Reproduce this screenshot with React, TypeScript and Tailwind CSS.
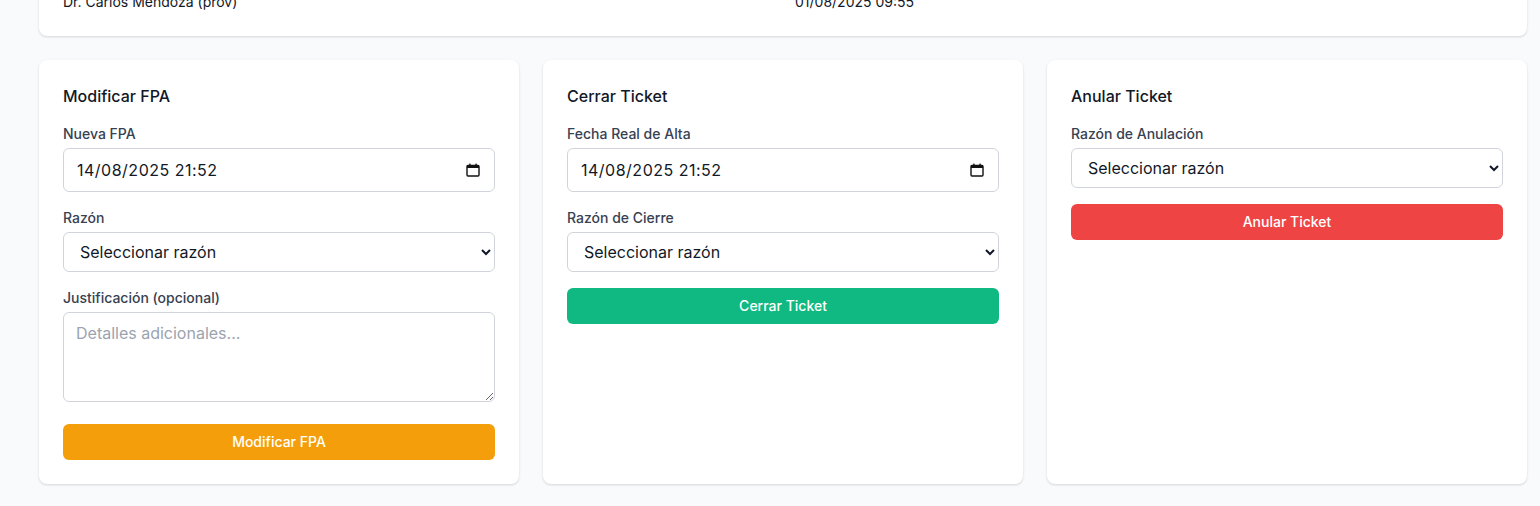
import type { ReactNode } from "react";

const field =
  "w-full rounded-md border border-[#d1d5db] bg-white px-3 text-base text-[#111827] outline-none focus:border-[#3b82f6]";

function Label({ children }: { children: ReactNode }) {
  return <label className="mb-1 block text-sm font-medium text-[#374151]">{children}</label>;
}

function ReasonSelect() {
  return (
    <select className={`${field} h-10`} defaultValue="">
      <option value="">Seleccionar razón</option>
      <option value="a">Evolución clínica</option>
      <option value="b">Pendiente de estudios</option>
    </select>
  );
}

function DateField() {
  return (
    <div className="relative mb-4">
      <input
        type="text"
        defaultValue="14/08/2025 21:52"
        className={`${field} h-11 pl-[13px] pr-10 tracking-[0.5px]`}
      />
      <svg
        className="pointer-events-none absolute right-[15px] top-[15px]"
        width="14"
        height="14"
        viewBox="0 0 14 14"
        fill="none"
      >
        <rect x="1" y="2.5" width="12" height="10.5" rx="1" stroke="#111" strokeWidth="1.4" />
        <rect x="1" y="2.5" width="12" height="2.5" fill="#111" />
        <rect x="3.2" y="0.6" width="1.4" height="2.4" fill="#111" />
        <rect x="9.4" y="0.6" width="1.4" height="2.4" fill="#111" />
      </svg>
    </div>
  );
}

function Card({ title, children }: { title: string; children: ReactNode }) {
  return (
    <div className="rounded-lg bg-white p-6 shadow-[0_1px_3px_rgba(0,0,0,0.1),0_1px_2px_rgba(0,0,0,0.06)]">
      <h3 className="mb-4 text-base font-medium text-[#111827]">{title}</h3>
      {children}
    </div>
  );
}

export default function App() {
  return (
    <div className="h-[506px] overflow-hidden bg-[#f9fafb] font-['Inter',sans-serif]">
      <div className="-mt-[32px] pl-[39px] pr-[13px]">
        <div className="rounded-lg bg-white p-6 shadow-[0_1px_3px_rgba(0,0,0,0.1),0_1px_2px_rgba(0,0,0,0.06)]">
          <div className="grid grid-cols-2 gap-6 text-sm text-[#111827]">
            <span>Dr. Carlos Mendoza (prov)</span>
            <span>01/08/2025 09:55</span>
          </div>
        </div>

        <div className="mt-6 grid grid-cols-3 gap-6">
          <Card title="Modificar FPA">
            <Label>Nueva FPA</Label>
            <DateField />
            <Label>Razón</Label>
            <ReasonSelect />
            <div className="mt-4">
              <Label>Justificación (opcional)</Label>
              <textarea
                rows={3}
                placeholder="Detalles adicionales..."
                className={`${field} block h-[90px] py-2 placeholder:text-[#9ca3af]`}
              />
            </div>
            <button className="mt-[22px] h-9 w-full rounded-md bg-[#f59e0b] text-sm font-medium text-white hover:bg-[#d97706]">
              Modificar FPA
            </button>
          </Card>

          <Card title="Cerrar Ticket">
            <Label>Fecha Real de Alta</Label>
            <DateField />
            <Label>Razón de Cierre</Label>
            <ReasonSelect />
            <button className="mt-4 h-9 w-full rounded-md bg-[#10b981] text-sm font-medium text-white hover:bg-[#059669]">
              Cerrar Ticket
            </button>
          </Card>

          <Card title="Anular Ticket">
            <Label>Razón de Anulación</Label>
            <ReasonSelect />
            <button className="mt-4 h-9 w-full rounded-md bg-[#ef4444] text-sm font-medium text-white hover:bg-[#dc2626]">
              Anular Ticket
            </button>
          </Card>
        </div>
      </div>
    </div>
  );
}
